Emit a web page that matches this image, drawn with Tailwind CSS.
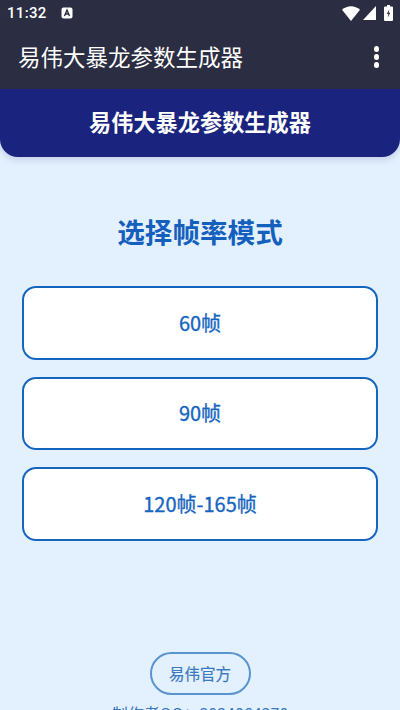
<!DOCTYPE html>
<html lang="zh">
<head>
  <meta charset="UTF-8">
  <meta name="viewport" content="width=device-width, initial-scale=1.0">
  <script src="https://cdn.jsdelivr.net/npm/@tailwindcss/browser@4"></script>
  <title>易伟大暴龙参数生成器</title>
</head>
<body class="bg-[#e3f0fd] h-[710px] overflow-hidden flex flex-col font-['Noto_Sans_CJK_SC','Noto_Sans',sans-serif]">
  <!-- status bar -->
  <div class="h-[26px] shrink-0 bg-[#2b2d42] flex items-center pl-[7px] pr-[7px] text-white">
    <span class="text-[15px] font-medium tracking-[0.3px] leading-none font-['Roboto',sans-serif]">11:32</span>
    <svg class="ml-[14px]" width="12" height="12" viewBox="0 0 12 12">
      <rect x="0.5" y="0.5" width="11" height="11" rx="2" fill="#fff"/>
      <path d="M3.5 9 L6 3 L8.5 9 M4.5 7 H7.5" fill="none" stroke="#2b2d42" stroke-width="1.4"/>
    </svg>
    <div class="ml-auto flex items-center">
      <svg width="18" height="15" viewBox="0 0 18 15"><path d="M0 3.8 C5 -1 13 -1 18 3.8 L9 15 Z" fill="#fff"/></svg>
      <svg class="ml-[3px]" width="13" height="14" viewBox="0 0 13 14"><path d="M13 0 V14 H0 Z" fill="#fff"/></svg>
      <svg class="ml-[8px]" width="9" height="16" viewBox="0 0 9 16">
        <path d="M3 0 H6 V1.5 H8 A1 1 0 0 1 9 2.5 V15 A1 1 0 0 1 8 16 H1 A1 1 0 0 1 0 15 V2.5 A1 1 0 0 1 1 1.5 H3 Z" fill="#fff"/>
        <path d="M5.2 4.5 L2.8 9 H4.3 L3.8 12.5 L6.2 7.8 H4.7 Z" fill="#2b2d42"/>
      </svg>
    </div>
  </div>

  <!-- app bar -->
  <div class="h-[63px] shrink-0 bg-[#2b2d42] flex items-center pl-[18px] pr-[21px] pb-[2px] text-white">
    <span class="text-[22.5px] leading-none">易伟大暴龙参数生成器</span>
    <div class="ml-auto flex flex-col gap-[2.5px] mt-[1px]">
      <span class="w-[5.5px] h-[5.5px] rounded-full bg-white"></span>
      <span class="w-[5.5px] h-[5.5px] rounded-full bg-white"></span>
      <span class="w-[5.5px] h-[5.5px] rounded-full bg-white"></span>
    </div>
  </div>

  <!-- header -->
  <div class="h-[68px] shrink-0 bg-[#1a237e] rounded-b-[18px] flex items-center justify-center pb-[3px] text-white shadow-[0_3px_6px_rgba(26,35,126,0.15)]">
    <h1 class="text-[22.2px] font-bold leading-none">易伟大暴龙参数生成器</h1>
  </div>

  <!-- content -->
  <div class="flex-1 flex flex-col items-center px-[22px] pt-[58px]">
    <h2 class="text-[27.6px] font-bold leading-[32px] text-[#1560bd]">选择帧率模式</h2>
    <div class="w-full flex flex-col gap-[17px] mt-[39px]">
      <button class="h-[73.5px] w-full bg-white border-2 border-[#1565c0] rounded-[14px] text-[20px] text-[#1565c0] [-webkit-text-stroke:0.35px_#1565c0]">60帧</button>
      <button class="h-[73.5px] w-full bg-white border-2 border-[#1565c0] rounded-[14px] text-[20px] text-[#1565c0] [-webkit-text-stroke:0.35px_#1565c0]">90帧</button>
      <button class="h-[73.5px] w-full bg-white border-2 border-[#1565c0] rounded-[14px] text-[20px] text-[#1565c0] [-webkit-text-stroke:0.35px_#1565c0]">120帧-165帧</button>
    </div>
    <button class="mt-[111.5px] w-[101px] h-[43px] shrink-0 rounded-full border-2 border-[#5a94cf] text-[15.5px] text-[#3a78bf] [-webkit-text-stroke:0.2px_#3a78bf]">易伟官方</button>
    <p class="mt-[8px] shrink-0 text-[16px] leading-[20px] text-[#3a78bf]">制作者QQ：3034064370</p>
  </div>
</body>
</html>
